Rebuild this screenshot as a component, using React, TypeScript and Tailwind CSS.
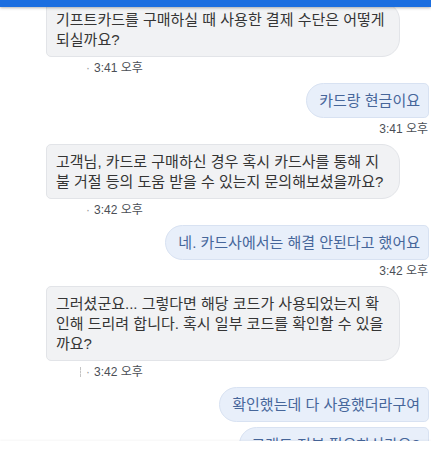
export default function App() {
  return (
    <div className="relative h-[451px] w-[431px] overflow-hidden bg-white font-['Liberation_Sans','Noto_Sans_CJK_KR',sans-serif]">
      {/* 상단 파란 바 (스크롤 위로 겹침) */}
      <div className="absolute inset-x-0 top-0 z-10 h-[7px] bg-[#1b6ee0] shadow-[0_1px_3px_rgba(0,0,0,0.3)]" />

      <div className="flex flex-col pt-[2px] pr-[2px]">
        <Received lines={["기프트카드를 구매하실 때 사용한 결제 수단은 어떻게", "되실까요?"]} />
        <ReceivedTime time="3:41 오후" />

        <Sent text="카드랑 현금이요" className="mt-[7px]" />
        <SentTime time="3:41 오후" />

        <div className="mt-[7px]">
          <Received
            lines={["고객님, 카드로 구매하신 경우 혹시 카드사를 통해 지", "불 거절 등의 도움 받을 수 있는지 문의해보셨을까요?"]}
          />
        </div>
        <ReceivedTime time="3:42 오후" />

        <Sent text="네. 카드사에서는 해결 안된다고 했어요" className="mt-[7px]" />
        <SentTime time="3:42 오후" />

        <div className="mt-[7px]">
          <Received
            lines={[
              "그러셨군요... 그렇다면 해당 코드가 사용되었는지 확",
              "인해 드리려 합니다. 혹시 일부 코드를 확인할 수 있을",
              "까요?",
            ]}
          />
        </div>
        <ReceivedTime time="3:42 오후" marker />

        <Sent text="확인했는데 다 사용했더라구여" className="mt-[7px]" />
        <Sent text="그래도 전부 필요하신가요?" className="mt-[5px]" />
      </div>

      {/* 하단 입력 영역 가림 */}
      <div className="absolute inset-x-0 bottom-0 h-[10px] bg-white shadow-[0_-1px_2px_rgba(0,0,0,0.04)]" />
    </div>
  )
}

function Received({ lines }: { lines: string[] }) {
  return (
    <div className="pl-[46px]">
      <div className="w-[354px] rounded-l-[5px] rounded-r-[18px] border border-[#e2e4e8] bg-[#f1f2f4] px-[9px] py-[6.5px] text-[15px] leading-5 text-[#353535]">
        {lines.map((l, i) => (
          <div key={i} className="whitespace-nowrap">
            {l}
          </div>
        ))}
      </div>
    </div>
  )
}

function ReceivedTime({ time, marker }: { time: string; marker?: boolean }) {
  return (
    <div className="mt-[3px] flex h-4 items-center pl-[80px] text-[12px] leading-4 text-[#4b4f56]">
      <span className={marker ? "h-[10px] w-[6px] border-l border-dashed border-[#c4c4c4]" : "w-[6px]"} />
      <span className="text-[#9a9a9a]">·</span>
      <span className="ml-[4px]">{time}</span>
    </div>
  )
}

function Sent({ text, className }: { text: string; className?: string }) {
  return (
    <div className={`flex justify-end ${className ?? ""}`}>
      <div className="whitespace-nowrap rounded-l-[18px] rounded-r-[5px] border border-[#d8e2f2] bg-[#e8effa] py-[6.5px] pl-3 pr-2 text-[15px] leading-5 text-[#46669a]">
        {text}
      </div>
    </div>
  )
}

function SentTime({ time }: { time: string }) {
  return <div className="mt-[3px] h-4 pr-px text-right text-[12px] leading-4 text-[#4b4f56]">{time}</div>
}
